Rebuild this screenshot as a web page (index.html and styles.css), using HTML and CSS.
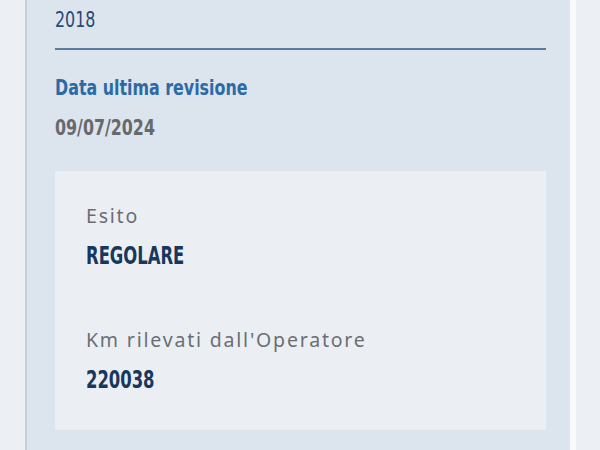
FILE: index.html
```html
<!DOCTYPE html>
<html lang="it">
<head>
  <meta charset="UTF-8" />
  <meta name="viewport" content="width=device-width, initial-scale=1.0"/>
  <title>Dettaglio revisione</title>
  <link rel="stylesheet" href="styles.css">
</head>
<body>
  <div class="page">
    <div class="card">
      <div class="field first">
        <p class="value plain">Immatricolato per la prima volta in Italia il giorno 10 maggio<br>2018</p>
      </div>

      <div class="field">
        <h2 class="label">Data ultima revisione</h2>
        <p class="value muted">09/07/2024</p>
      </div>

      <div class="result">
        <div class="item">
          <span class="item-label">Esito</span>
          <strong class="item-value">REGOLARE</strong>
        </div>
        <div class="item">
          <span class="item-label">Km rilevati dall'Operatore</span>
          <strong class="item-value">220038</strong>
        </div>
      </div>
    </div>
  </div>
</body>
</html>
```

FILE: styles.css
```css
body { margin: 0; background: #eceff3; font-family: "DejaVu Sans Condensed", "Liberation Sans", sans-serif; overflow: hidden; }
.page { padding-left: 25px; padding-right: 24px; }
.card { background: #dce4ee; border-left: 2px solid #c7cfda; border-right: 6px solid #f8f9fb; margin-top: -28px; padding: 0 24px 60px 28px; }

/* narrow headline face: condensed DejaVu squeezed a bit more */
.value, .label, .item-value { transform-origin: left center; }

.field { padding-bottom: 8px; }
.field.first { border-bottom: 2px solid #5a7aa0; padding-bottom: 12px; margin-bottom: 24px; }
.value { margin: 0; font-size: 21px; line-height: 28px; transform: scaleX(0.84); }
.value.plain { color: #254a73; width: 119%; line-height: 32px; }
.value.muted { color: #68696b; font-weight: bold; margin-top: 12px; }
.label { margin: 0; color: #2c6aa5; font-size: 21px; line-height: 28px; font-weight: bold; transform: scaleX(0.84); }

.result { background: #ebeff3; margin-top: 21px; padding: 32px 31px 36px; display: flex; flex-direction: column; gap: 57px; }
.item { display: flex; flex-direction: column; gap: 13px; align-items: flex-start; }
.item-label { font-family: "Noto Sans", sans-serif; color: #6a6e73; font-size: 19.5px; letter-spacing: 1.8px; line-height: 26px; }
.item-value { color: #17375f; font-size: 25px; line-height: 28px; transform: scaleX(0.73); }
```
